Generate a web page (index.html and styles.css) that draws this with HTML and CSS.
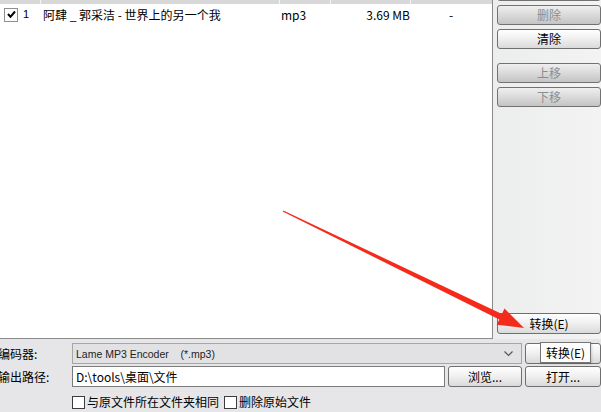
FILE: index.html
```html
<!DOCTYPE html>
<html lang="zh">
<head>
<meta charset="utf-8">
<title>转换</title>
<link rel="stylesheet" href="styles.css">
</head>
<body>
<div class="app">
  <div class="top">
    <div class="list">
      <div class="grid header">
        <div class="hcell"></div>
        <div class="hcell"></div>
        <div class="hcell"></div>
        <div class="hcell"></div>
        <div class="hcell"></div>
      </div>
      <div class="grid row">
        <div class="cell first">
          <span class="check on"><svg width="11" height="11" viewBox="0 0 11 11"><path d="M2 5 L4.5 7.8 L9 2.5" fill="none" stroke="#000" stroke-width="2"/></svg></span>
          <span class="num">1</span>
        </div>
        <div class="cell name">阿肆 _ 郭采洁 - 世界上的另一个我</div>
        <div class="cell type">mp3</div>
        <div class="cell size">3.69 MB</div>
        <div class="cell dash">-</div>
      </div>
    </div>
    <div class="side">
      <button class="btn dis cut"></button>
      <button class="btn dis">删除</button>
      <button class="btn">清除</button>
      <button class="btn dis gap">上移</button>
      <button class="btn dis">下移</button>
      <button class="btn convert">转换(E)</button>
    </div>
  </div>
  <div class="bottom">
    <div class="line">
      <span class="label">编码器:</span>
      <div class="combo"><span class="ctext">Lame MP3 Encoder&nbsp;&nbsp;&nbsp;&nbsp;(*.mp3)</span><svg class="chev" width="9" height="6" viewBox="0 0 9 6"><path d="M0.5 0.5 L4.5 4.5 L8.5 0.5" fill="none" stroke="#555" stroke-width="1.2"/></svg></div>
      <button class="btn wide"></button>
    </div>
    <div class="line">
      <span class="label">输出路径:</span>
      <div class="field">D:\tools\桌面\文件</div>
      <button class="btn browse">浏览...</button>
      <button class="btn wide">打开...</button>
    </div>
    <div class="line opts">
      <label class="opt"><span class="check"></span>与原文件所在文件夹相同</label>
      <label class="opt"><span class="check"></span>删除原始文件</label>
    </div>
  </div>
  <svg class="arrow" width="601" height="412" viewBox="0 0 601 412">
    <polygon points="282.7,211.6 499.3,319.4 496.7,324.8 524,328 504.5,308.6 501.9,314.0 283.3,210.4" fill="#f42a1b"/>
  </svg>
  <div class="tip">转换(E)</div>
</div>
</body>
</html>
```
FILE: styles.css
```css
html, body {
  margin: 0;
  padding: 0;
}
body {
  width: 601px;
  height: 412px;
  overflow: hidden;
  font-family: "Noto Sans CJK SC", "Liberation Sans", sans-serif;
  font-size: 12px;
  color: #000;
  background: #e6e6e8;
}
.app {
  position: relative;
  width: 601px;
  height: 412px;
}
.top {
  display: flex;
  height: 339px;
}
.list {
  width: 492px;
  height: 338px;
  background: #fff;
  border-right: 1px solid #8c8c8c;
  border-bottom: 1px solid #8c8c8c;
  box-sizing: content-box;
  overflow: hidden;
}
.grid {
  display: grid;
  grid-template-columns: 41px 239px 51px 80px 81px;
}
.header {
  height: 4px;
  background: #d8d8d8;
}
.hcell {
  border-right: 1px solid #f4f4f4;
}
.hcell:last-child {
  border-right: none;
}
.row {
  margin-top: 3px;
  height: 15px;
  line-height: 15px;
  align-items: center;
}
.cell {
  white-space: nowrap;
  overflow: hidden;
}
.first {
  display: flex;
  align-items: center;
  padding-left: 4px;
}
.num {
  margin-left: 5px;
  font-family: "Liberation Sans", sans-serif;
  font-size: 11px;
}
.name {
  padding-left: 2px;
}
.type {
  padding-left: 1px;
}
.size {
  text-align: right;
  padding-right: 1px;
}
.dash {
  text-align: center;
  padding-right: 1px;
}
.check {
  display: inline-flex;
  align-items: center;
  justify-content: center;
  width: 12px;
  height: 12px;
  border: 1px solid #8e8f8f;
  background: #fff;
  flex: none;
}
.side {
  flex: 1;
  display: flex;
  flex-direction: column;
  padding-left: 4px;
  background: linear-gradient(90deg, #eceded, #f3f3f4);
  overflow: hidden;
}
.btn {
  display: block;
  height: 20px;
  width: 104px;
  margin: 0;
  padding: 0;
  border: 1px solid #6f6f6f;
  border-radius: 3px;
  background: linear-gradient(#ffffff, #f1f1f1 45%, #dadada);
  font-family: "Noto Sans CJK SC", sans-serif;
  font-size: 12px;
  line-height: 16px;
  color: #000;
  box-sizing: border-box;
  flex: none;
}
.side .btn {
  margin-top: 4px;
}
.side .btn.cut {
  margin-top: -19px;
}
.btn.dis {
  color: #8d8d8d;
  background: linear-gradient(#efefef, #dcdcdc 45%, #c4c4c4);
  border-color: #727272;
}
.side .btn.gap {
  margin-top: 14px;
}
.side .btn.convert {
  margin-top: auto;
  margin-bottom: 5px;
  height: 21px;
}
.bottom {
  height: 73px;
  padding-top: 4px;
  box-sizing: border-box;
}
.line {
  display: flex;
  align-items: center;
  height: 21px;
  margin-bottom: 2px;
}
.label {
  width: 74px;
  margin-left: -2px;
  flex: none;
  font-size: 12px;
}
.combo {
  width: 452px;
  height: 21px;
  box-sizing: border-box;
  border: 1px solid #a6a6a6;
  background: #e2e2e4;
  display: flex;
  align-items: center;
  justify-content: space-between;
  padding: 0 8px 0 3px;
}
.ctext {
  font-family: "Liberation Sans", sans-serif;
  font-size: 10.5px;
  color: #222;
}
.btn.wide {
  margin-left: 3px;
  width: 76px;
  height: 21px;
}
.field {
  width: 375px;
  height: 21px;
  box-sizing: border-box;
  border: 1px solid #7a7a7a;
  background: #fff;
  padding-left: 3px;
  line-height: 19px;
  font-size: 12px;
}
.btn.browse {
  margin-left: 3px;
  width: 74px;
  height: 21px;
}
.opts {
  padding-left: 72px;
  margin-top: 7px;
  height: 16px;
}
.opt {
  display: flex;
  align-items: center;
  gap: 2px;
  font-size: 12px;
  margin-right: 5px;
  line-height: 16px;
}
.opt .check {
  border-color: #3c3c3c;
  width: 11px;
  height: 11px;
}
.arrow {
  position: absolute;
  left: 0;
  top: 0;
  pointer-events: none;
}
.tip {
  position: absolute;
  left: 540px;
  top: 342px;
  width: 51px;
  height: 21px;
  box-sizing: border-box;
  border: 1px solid #767676;
  background: #fcfcfc;
  font-size: 12px;
  line-height: 19px;
  text-align: center;
  box-shadow: 1px 1px 2px rgba(0,0,0,0.15);
}
```
